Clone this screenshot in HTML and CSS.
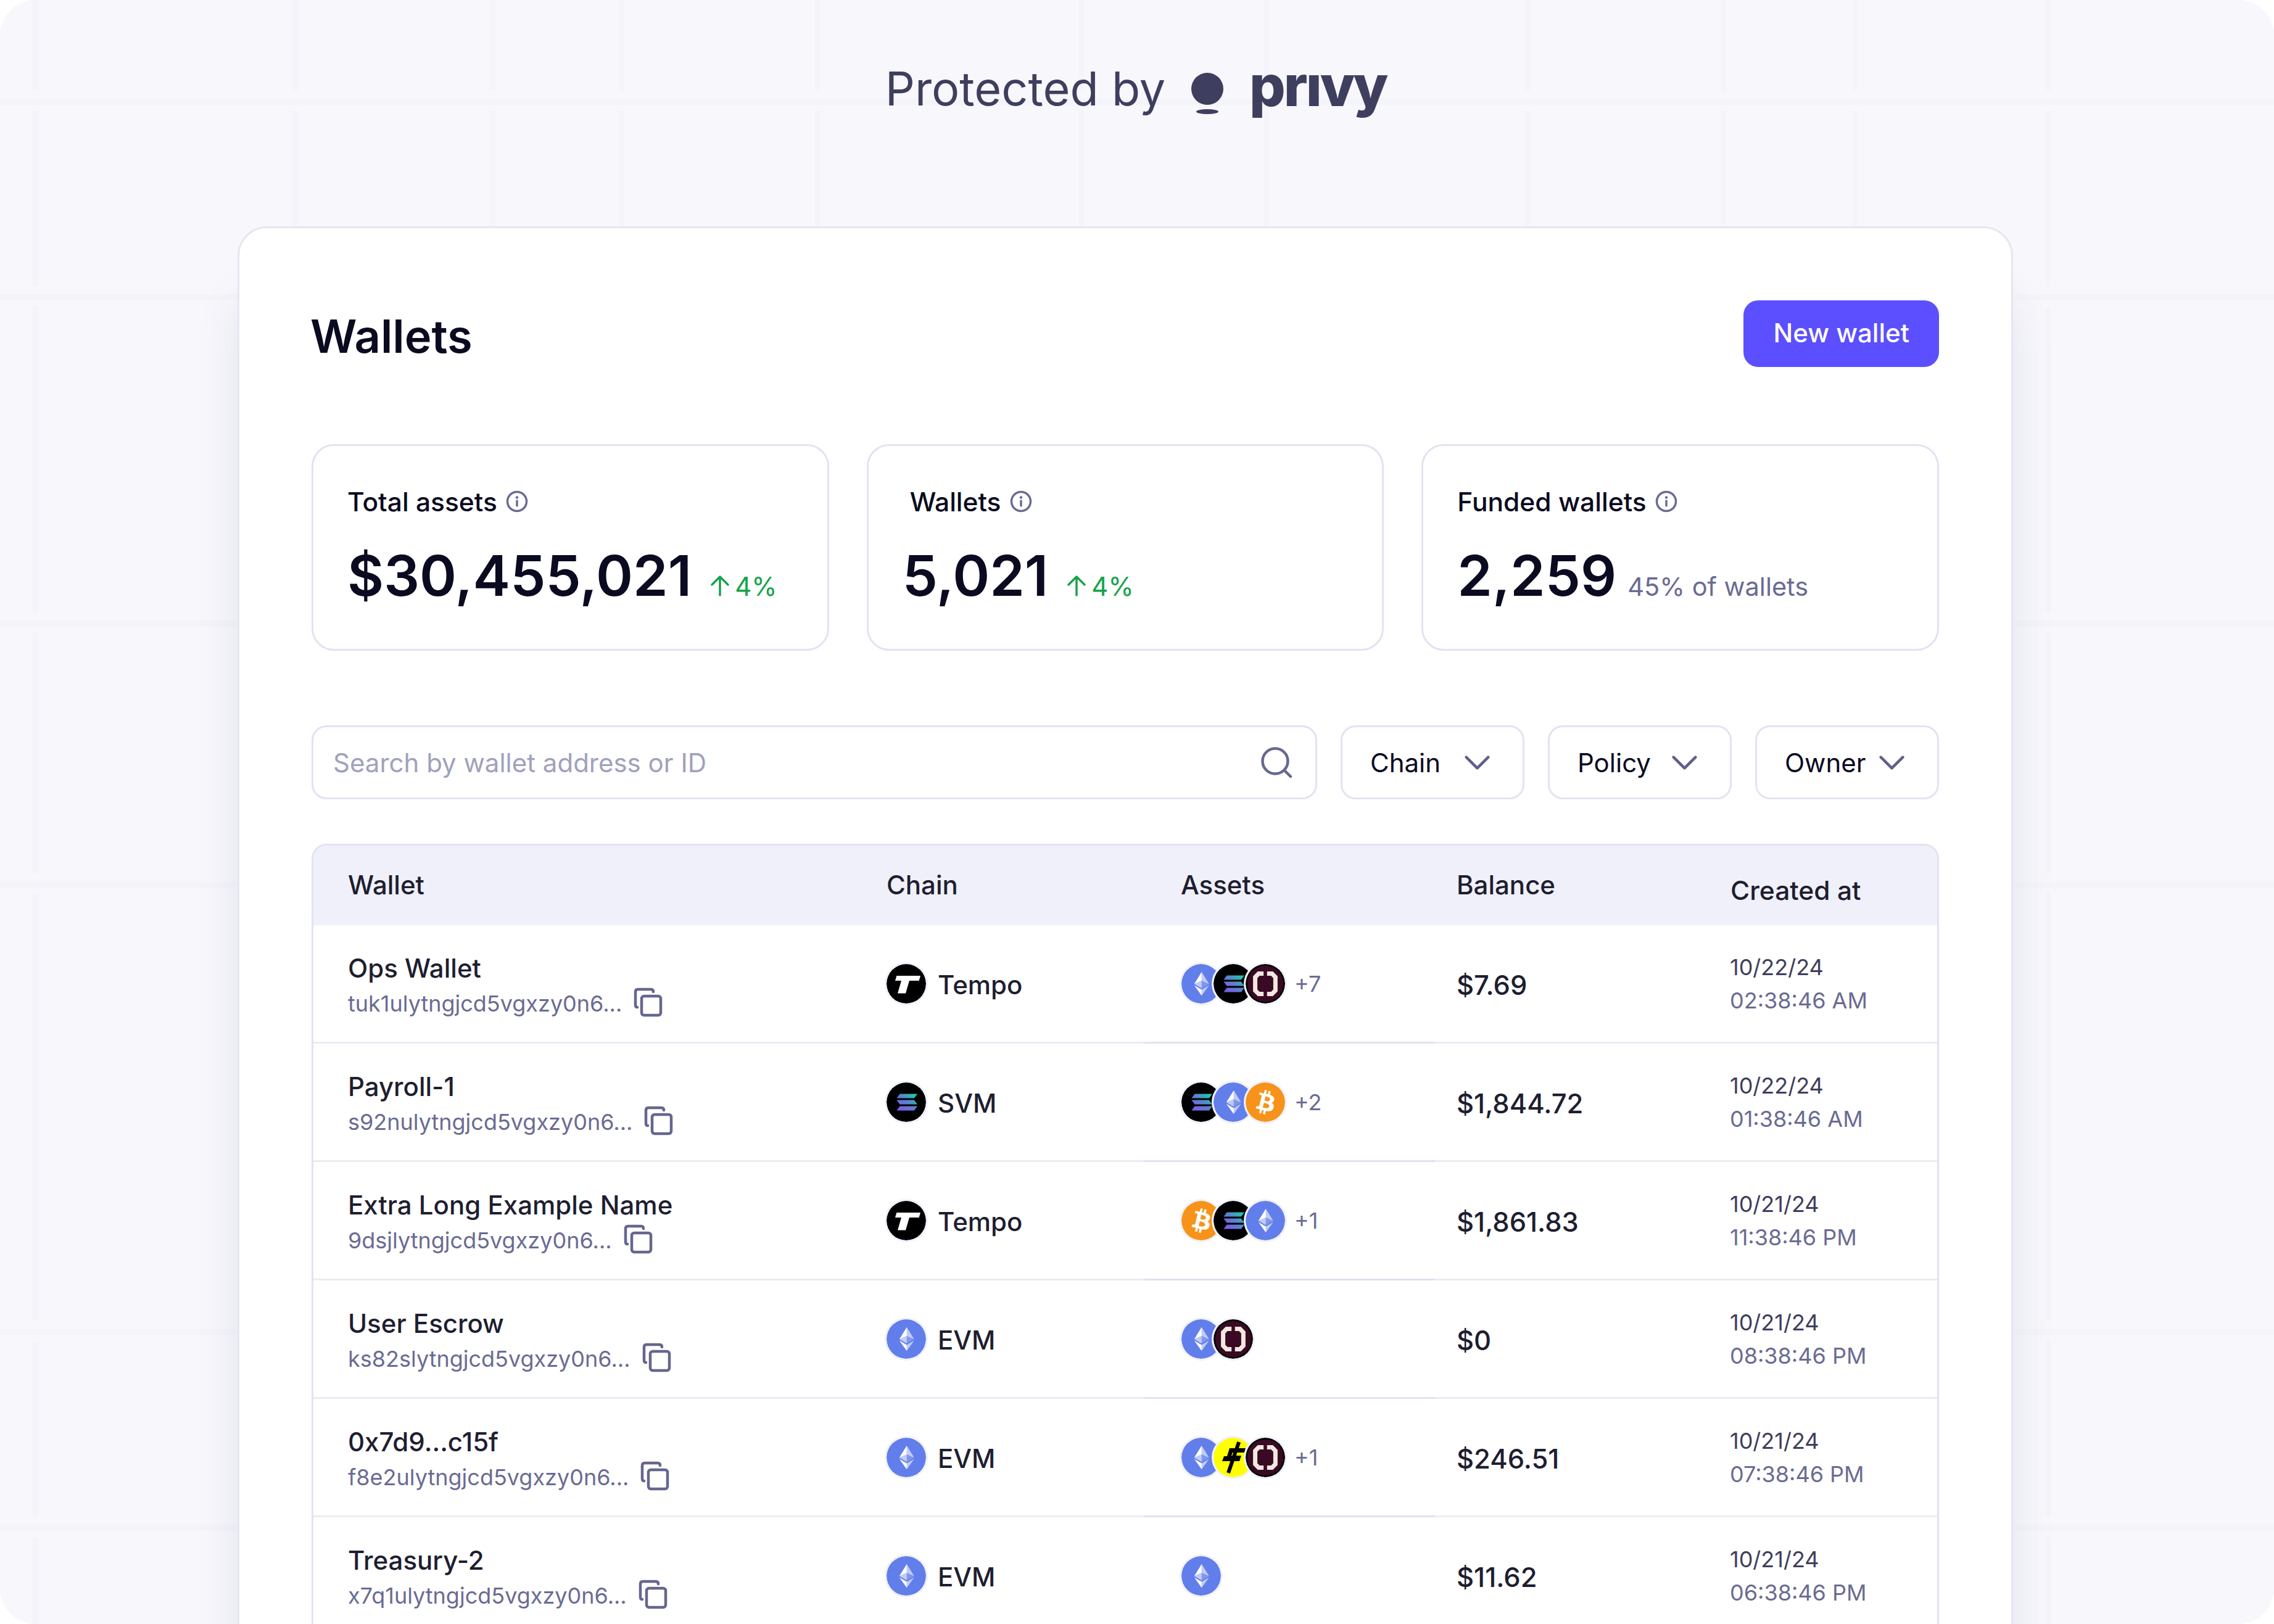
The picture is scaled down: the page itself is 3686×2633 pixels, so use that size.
FILE: index.html
```html
<!DOCTYPE html>
<html lang="en">
<head>
    <meta charset="UTF-8">
    <title>Wallets</title>
    <link rel="stylesheet" href="styles.css">
</head>
<body>
    <svg class="defs" aria-hidden="true">
        <defs>
            <linearGradient id="sol" gradientUnits="userSpaceOnUse" x1="24" y1="8" x2="9" y2="24">
                <stop offset="0" stop-color="#14d8a0"/>
                <stop offset="0.5" stop-color="#5a80d0"/>
                <stop offset="1" stop-color="#8a4ff0"/>
            </linearGradient>
        </defs>
        <symbol id="eth" viewBox="0 0 32 32">
            <circle cx="16" cy="16" r="16" fill="#627eea"/>
            <g transform="translate(3.2 3.2) scale(.8)" fill="#fff">
                <path fill-opacity=".6" d="M16.5 4v8.87l7.5 3.35z"/>
                <path d="M16.5 4L9 16.22l7.5-3.35z"/>
                <path fill-opacity=".6" d="M16.5 21.97V28L24 17.62z"/>
                <path d="M16.5 28v-6.03L9 17.62z"/>
                <path fill-opacity=".2" d="M16.5 20.57l7.5-4.35-7.5-3.35z"/>
                <path fill-opacity=".6" d="M9 16.22l7.5 4.35v-7.7z"/>
            </g>
        </symbol>
        <symbol id="sol-icon" viewBox="0 0 32 32">
            <circle cx="16" cy="16" r="16" fill="#000"/>
            <path fill="url(#sol)" d="M10.8 9.2H25l-2.600 3.600H8.200zM8.200 14.200h14.200l2.600 3.600H10.800zM10.800 19.200H25l-2.600 3.600H8.200z"/>
        </symbol>
        <symbol id="tempo" viewBox="0 0 32 32">
            <circle cx="16" cy="16" r="16" fill="#000"/>
            <path fill="#fff" d="M8.200 9.500h19.300l-1.200 4h-7.800l-3 10.300H9l3-10.300H7z"/>
        </symbol>
        <symbol id="btc" viewBox="0 0 32 32">
            <circle cx="16" cy="16" r="16" fill="#f7931a"/>
            <path fill="#fff" d="M23.189 14.02c.314-2.096-1.283-3.223-3.465-3.975l.708-2.84-1.728-.43-.69 2.765c-.454-.114-.92-.22-1.385-.326l.695-2.783L15.596 6l-.708 2.839c-.376-.086-.746-.17-1.104-.26l.002-.009-2.384-.595-.46 1.846s1.283.294 1.256.312c.7.175.826.638.805 1.006l-.806 3.235c.048.012.11.03.18.057l-.183-.045-1.13 4.532c-.086.212-.303.531-.793.41.018.025-1.256-.313-1.256-.313l-.858 1.978 2.25.561c.418.105.828.215 1.231.318l-.715 2.872 1.727.43.708-2.84c.472.127.93.245 1.378.357l-.706 2.828 1.728.43.715-2.866c2.948.558 5.164.333 6.097-2.333.752-2.146-.037-3.385-1.588-4.192 1.13-.26 1.98-1.003 2.207-2.538zm-3.95 5.538c-.533 2.147-4.148.986-5.32.695l.95-3.805c1.172.293 4.929.872 4.37 3.11zm.535-5.569c-.487 1.953-3.495.96-4.47.717l.86-3.45c.975.243 4.118.696 3.61 2.733z"/>
        </symbol>
        <symbol id="plum" viewBox="0 0 32 32">
            <circle cx="16" cy="16" r="16" fill="#000"/>
            <circle cx="16" cy="16" r="14.600" fill="#3a0a24"/>
            <path fill="none" stroke="#f3e8e0" stroke-width="3.500" d="M14.600 7.800h-4l-2.800 2.800v10.800l2.800 2.800h4M17.400 7.800h4l2.800 2.800v10.800l-2.800 2.800h-4"/>
        </symbol>
        <symbol id="usd" viewBox="0 0 32 32">
            <circle cx="16" cy="16" r="16" fill="#ff0"/>
            <path fill="#000" d="M13 8.500H26L25 12H15.500L14.500 14.500H22.500L21 19H7L8.500 15H11z"/>
            <path fill="none" stroke="#000" stroke-width="3" d="M20.600 3.500L12 28.500"/>
        </symbol>
        <symbol id="copy" viewBox="0 0 48 48">
            <rect x="13" y="14" width="31" height="31" rx="4" fill="none" stroke="#65668f" stroke-width="4.500"/>
            <path fill="none" stroke="#65668f" stroke-width="4.500" stroke-linecap="round" d="M6 32c-2 0-3-1.500-3-3.500V7c0-2.500 1.500-4 4-4h21c2.500 0 4 1.500 4 4"/>
        </symbol>
        <symbol id="info" viewBox="0 0 36 36">
            <circle cx="18" cy="18" r="15.500" fill="none" stroke="#6a6b93" stroke-width="3.500"/>
            <path fill="none" stroke="#6a6b93" stroke-width="3.500" stroke-linecap="round" d="M18 17v8"/>
            <circle cx="18" cy="11.500" r="2.200" fill="#6a6b93"/>
        </symbol>
        <symbol id="up" viewBox="0 0 32 36">
            <path fill="none" stroke="#16a34a" stroke-width="3.500" stroke-linecap="round" stroke-linejoin="round" d="M16 33V3M3 16L16 3l13 13"/>
        </symbol>
        <symbol id="chevron" viewBox="0 0 24 24">
            <path fill="none" stroke="#5f6089" stroke-width="1.900" stroke-linecap="round" stroke-linejoin="round" d="M19.500 8.250l-7.500 7.500-7.500-7.500"/>
        </symbol>
    </svg>

    <div class="page">
        <div class="brand">
            <span>Protected by</span>
            <span class="brand-mark">
                <svg width="52" height="72" viewBox="0 0 52 72"><circle cx="26" cy="26" r="26" fill="#3e3e5e"/><ellipse cx="26" cy="63" rx="18" ry="4" fill="#3e3e5e"/></svg>
                <span class="brand-name" aria-label="privy">prıvy</span>
            </span>
        </div>

        <div class="card">
            <div class="card-head">
                <h1>Wallets</h1>
                <button class="primary-btn">New wallet</button>
            </div>

            <div class="stats">
                <div class="stat">
                    <div class="stat-label">Total assets <svg class="info"><use href="#info"/></svg></div>
                    <div class="stat-line">
                        <span class="stat-value">$30,455,021</span>
                        <span class="stat-delta"><svg class="up"><use href="#up"/></svg>4%</span>
                    </div>
                </div>
                <div class="stat">
                    <div class="stat-label stat-label-nudge">Wallets <svg class="info"><use href="#info"/></svg></div>
                    <div class="stat-line">
                        <span class="stat-value">5,021</span>
                        <span class="stat-delta"><svg class="up"><use href="#up"/></svg>4%</span>
                    </div>
                </div>
                <div class="stat">
                    <div class="stat-label">Funded wallets <svg class="info"><use href="#info"/></svg></div>
                    <div class="stat-line">
                        <span class="stat-value">2,259</span>
                        <span class="stat-note">45% of wallets</span>
                    </div>
                </div>
            </div>

            <div class="filters">
                <div class="search">
                    <span>Search by wallet address or ID</span>
                    <svg width="52" height="52" viewBox="0 0 52 52"><circle cx="24" cy="24" r="20.500" fill="none" stroke="#676890" stroke-width="4.500"/><path d="M39 39l10 10" stroke="#676890" stroke-width="4.500" stroke-linecap="round"/></svg>
                </div>
                <div class="select">Chain <svg class="chev"><use href="#chevron"/></svg></div>
                <div class="select">Policy <svg class="chev"><use href="#chevron"/></svg></div>
                <div class="select">Owner <svg class="chev"><use href="#chevron"/></svg></div>
            </div>

            <div class="table">
                <div class="row row-head">
                    <div class="cell c-wallet">Wallet</div>
                    <div class="cell c-chain">Chain</div>
                    <div class="cell c-assets">Assets</div>
                    <div class="cell c-balance">Balance</div>
                    <div class="cell c-date head-low">Created at</div>
                </div>

                <div class="row">
                    <div class="cell c-wallet">
                        <div class="name">Ops Wallet</div>
                        <div class="addr">tuk1ulytngjcd5vgxzy0n6... <svg class="copy"><use href="#copy"/></svg></div>
                    </div>
                    <div class="cell c-chain"><svg class="coin"><use href="#tempo"/></svg>Tempo</div>
                    <div class="cell c-assets">
                        <svg class="coin"><use href="#eth"/></svg><svg class="coin"><use href="#sol-icon"/></svg><svg class="coin"><use href="#plum"/></svg><span class="more">+7</span>
                    </div>
                    <div class="cell c-balance">$7.69</div>
                    <div class="cell c-date"><div class="day">10/22/24</div><div class="time">02:38:46 AM</div></div>
                </div>

                <div class="row">
                    <div class="cell c-wallet">
                        <div class="name">Payroll-1</div>
                        <div class="addr">s92nulytngjcd5vgxzy0n6... <svg class="copy"><use href="#copy"/></svg></div>
                    </div>
                    <div class="cell c-chain"><svg class="coin"><use href="#sol-icon"/></svg>SVM</div>
                    <div class="cell c-assets">
                        <svg class="coin"><use href="#sol-icon"/></svg><svg class="coin"><use href="#eth"/></svg><svg class="coin"><use href="#btc"/></svg><span class="more">+2</span>
                    </div>
                    <div class="cell c-balance">$1,844.72</div>
                    <div class="cell c-date"><div class="day">10/22/24</div><div class="time">01:38:46 AM</div></div>
                </div>

                <div class="row">
                    <div class="cell c-wallet">
                        <div class="name">Extra Long Example Name</div>
                        <div class="addr">9dsjlytngjcd5vgxzy0n6... <svg class="copy"><use href="#copy"/></svg></div>
                    </div>
                    <div class="cell c-chain"><svg class="coin"><use href="#tempo"/></svg>Tempo</div>
                    <div class="cell c-assets">
                        <svg class="coin"><use href="#btc"/></svg><svg class="coin"><use href="#sol-icon"/></svg><svg class="coin"><use href="#eth"/></svg><span class="more">+1</span>
                    </div>
                    <div class="cell c-balance">$1,861.83</div>
                    <div class="cell c-date"><div class="day">10/21/24</div><div class="time">11:38:46 PM</div></div>
                </div>

                <div class="row">
                    <div class="cell c-wallet">
                        <div class="name">User Escrow</div>
                        <div class="addr">ks82slytngjcd5vgxzy0n6... <svg class="copy"><use href="#copy"/></svg></div>
                    </div>
                    <div class="cell c-chain"><svg class="coin"><use href="#eth"/></svg>EVM</div>
                    <div class="cell c-assets">
                        <svg class="coin"><use href="#eth"/></svg><svg class="coin"><use href="#plum"/></svg>
                    </div>
                    <div class="cell c-balance">$0</div>
                    <div class="cell c-date"><div class="day">10/21/24</div><div class="time">08:38:46 PM</div></div>
                </div>

                <div class="row">
                    <div class="cell c-wallet">
                        <div class="name">0x7d9...c15f</div>
                        <div class="addr">f8e2ulytngjcd5vgxzy0n6... <svg class="copy"><use href="#copy"/></svg></div>
                    </div>
                    <div class="cell c-chain"><svg class="coin"><use href="#eth"/></svg>EVM</div>
                    <div class="cell c-assets">
                        <svg class="coin"><use href="#eth"/></svg><svg class="coin"><use href="#usd"/></svg><svg class="coin"><use href="#plum"/></svg><span class="more">+1</span>
                    </div>
                    <div class="cell c-balance">$246.51</div>
                    <div class="cell c-date"><div class="day">10/21/24</div><div class="time">07:38:46 PM</div></div>
                </div>

                <div class="row">
                    <div class="cell c-wallet">
                        <div class="name">Treasury-2</div>
                        <div class="addr">x7q1ulytngjcd5vgxzy0n6... <svg class="copy"><use href="#copy"/></svg></div>
                    </div>
                    <div class="cell c-chain"><svg class="coin"><use href="#eth"/></svg>EVM</div>
                    <div class="cell c-assets">
                        <svg class="coin"><use href="#eth"/></svg>
                    </div>
                    <div class="cell c-balance">$11.62</div>
                    <div class="cell c-date"><div class="day">10/21/24</div><div class="time">06:38:46 PM</div></div>
                </div>
            </div>
        </div>
    </div>
</body>
</html>
```

FILE: styles.css
```css
:root {
    --ink: #0a0a20;
    --text: #1e1e30;
    --muted: #6a6b93;
    --line: #e2e3f2;
    --page: #f7f7fc;
    --grid: #f4f5fa;
}

* {
    box-sizing: border-box;
}

body {
    margin: 0;
    background: #fff;
    font-family: "Inter", "Liberation Sans", sans-serif;
    color: var(--text);
}

/* symbols only; display:none would drop the gradient */
.defs {
    position: absolute;
    width: 0;
    height: 0;
}

.page {
    width: 3686px;
    height: 2633px;
    overflow: hidden;
    border-radius: 58px;
    background-color: var(--page);
    /* faint grid behind the card: breaks in the uprights sit around each horizontal line */
    background-image:
        linear-gradient(to bottom,
            transparent 147px, var(--page) 147px, var(--page) 160px, var(--grid) 160px, var(--grid) 170px, var(--page) 170px, var(--page) 180px, transparent 180px,
            transparent 464px, var(--page) 464px, var(--page) 477px, var(--grid) 477px, var(--grid) 487px, var(--page) 487px, var(--page) 497px, transparent 497px,
            transparent 993px, var(--page) 993px, var(--page) 1006px, var(--grid) 1006px, var(--grid) 1016px, var(--page) 1016px, var(--page) 1026px, transparent 1026px,
            transparent 1416px, var(--page) 1416px, var(--page) 1429px, var(--grid) 1429px, var(--grid) 1439px, var(--page) 1439px, var(--page) 1449px, transparent 1449px,
            transparent 2141px, var(--page) 2141px, var(--page) 2154px, var(--grid) 2154px, var(--grid) 2164px, var(--page) 2164px, var(--page) 2174px, transparent 2174px,
            transparent 2459px, var(--page) 2459px, var(--page) 2472px, var(--grid) 2472px, var(--grid) 2482px, var(--page) 2482px, var(--page) 2492px, transparent 2492px),
        linear-gradient(to right,
            transparent 52px, var(--grid) 52px, var(--grid) 62px, transparent 62px,
            transparent 473px, var(--grid) 473px, var(--grid) 483px, transparent 483px,
            transparent 793px, var(--grid) 793px, var(--grid) 803px, transparent 803px,
            transparent 1004px, var(--grid) 1004px, var(--grid) 1012px, transparent 1012px,
            transparent 1321px, var(--grid) 1321px, var(--grid) 1329px, transparent 1329px,
            transparent 1749px, var(--grid) 1749px, var(--grid) 1757px, transparent 1757px,
            transparent 2049px, var(--grid) 2049px, var(--grid) 2057px, transparent 2057px,
            transparent 2472px, var(--grid) 2472px, var(--grid) 2480px, transparent 2480px,
            transparent 2789px, var(--grid) 2789px, var(--grid) 2797px, transparent 2797px,
            transparent 3003px, var(--grid) 3003px, var(--grid) 3011px, transparent 3011px,
            transparent 3316px, var(--grid) 3316px, var(--grid) 3324px, transparent 3324px);
}

.brand {
    height: 286px;
    margin-bottom: 81px;
    padding-right: 4px;
    display: flex;
    align-items: center;
    justify-content: center;
    gap: 42px;
    font-size: 75.5px;
    color: #3e3e5e;
}

.brand-mark {
    display: flex;
    align-items: center;
    gap: 42px;
}

.brand-mark svg {
    margin-top: 22px;
}

.brand-name {
    margin-bottom: 8px;
    font-size: 92px;
    font-weight: 800;
    letter-spacing: -3px;
    line-height: 1;
}

.card {
    width: 2878px;
    height: 2400px;
    margin-left: 385px;
    padding: 117px;
    background: #fff;
    border: 3px solid #e6e6f3;
    border-radius: 48px;
    box-shadow: 0 110px 70px rgba(60, 60, 110, 0.1);
}

.card-head {
    height: 108px;
    margin-bottom: 125px;
    display: flex;
    align-items: center;
    justify-content: space-between;
}

.card-head h1 {
    margin: 7px 0 0 -2px;
    font-size: 74px;
    font-weight: 600;
    color: var(--ink);
}

.primary-btn {
    height: 108px;
    padding: 0 48px 3px;
    border: none;
    border-radius: 24px;
    background: #5b4fff;
    color: #fff;
    font-family: inherit;
    font-size: 42px;
    font-weight: 500;
}

.stats {
    display: grid;
    grid-template-columns: repeat(3, 1fr);
    gap: 61px;
    margin-bottom: 121px;
}

.stat {
    height: 335px;
    padding: 60px 55px 0;
    border: 3px solid var(--line);
    border-radius: 36px;
}

.stat-label {
    display: flex;
    align-items: center;
    gap: 14px;
    height: 60px;
    font-size: 42.5px;
    font-weight: 500;
    color: var(--ink);
}

.stat-label-nudge {
    margin-left: 12px;
}

.info {
    width: 36px;
    height: 36px;
}

.stat-line {
    display: flex;
    align-items: baseline;
    gap: 30px;
    margin-top: 35px;
    white-space: nowrap;
}

.stat-value {
    font-size: 91px;
    font-weight: 600;
    color: var(--ink);
}

.stat-delta {
    font-size: 42px;
    color: #16a34a;
}

.stat-note {
    margin-left: -12px;
    font-size: 41.5px;
    color: var(--muted);
}

.up {
    width: 32px;
    height: 36px;
    margin-right: 8px;
    vertical-align: -2px;
}

.filters {
    display: flex;
    gap: 38px;
    height: 120px;
    margin-bottom: 72px;
}

.search {
    flex: 1;
    display: flex;
    align-items: center;
    justify-content: space-between;
    padding: 0 37px 0 32px;
    border: 3px solid var(--line);
    border-radius: 24px;
    font-size: 42px;
    color: #a0a1bd;
}

.select {
    width: 298px;
    display: flex;
    align-items: center;
    justify-content: space-between;
    padding: 0 45px;
    border: 3px solid var(--line);
    border-radius: 24px;
    font-size: 42px;
    color: var(--ink);
}

.chev {
    width: 57px;
    height: 57px;
    flex: none;
}

.table {
    border: 3px solid var(--line);
    border-bottom: none;
    border-radius: 24px 24px 0 0;
    overflow: hidden;
}

.row {
    display: grid;
    grid-template-columns: 870px 477px 471px 440px 1fr;
    height: 192px;
    font-size: 42px;
    font-weight: 500;
}

.cell {
    display: flex;
    align-items: center;
    border-bottom: 3px solid #e9edf3;
}

.c-wallet {
    flex-direction: column;
    align-items: flex-start;
    justify-content: center;
    padding: 4px 0 0 56px;
}

.c-chain {
    gap: 16px;
    padding: 4px 0 0 56px;
}

.c-chain .coin {
    margin-top: -4px;
}

.c-assets {
    padding-left: 57px;
    border-bottom-color: #e0e2f0;
}

.c-balance {
    padding: 4px 0 0 35px;
    font-size: 43.5px;
}

.c-date {
    flex-direction: column;
    align-items: flex-start;
    justify-content: center;
    padding-left: 38px;
}

.row-head {
    height: 129px;
    background: #f0f0fa;
}

.row-head .cell {
    flex-direction: row;
    align-items: center;
    justify-content: flex-start;
    border-bottom: none;
    padding-top: 0;
    padding-bottom: 3px;
    font-size: 42px;
}

.row-head .c-chain,
.row-head .c-assets {
    padding-left: 59px;
}

.row-head .head-low {
    padding-top: 15px;
    padding-bottom: 0;
    padding-left: 39px;
    font-size: 42.5px;
}

.name {
    line-height: 60px;
}

.addr {
    display: flex;
    align-items: center;
    gap: 19px;
    height: 54px;
    font-size: 36px;
    font-weight: 400;
    color: var(--muted);
}

.copy {
    width: 48px;
    height: 48px;
    margin-top: -4px;
}

.coin {
    width: 70px;
    height: 70px;
    flex: none;
    padding: 3px;
    border-radius: 50%;
    background: #f0f1fa;
}

.c-assets .coin + .coin {
    margin-left: -18px;
}

.more {
    margin-left: 12px;
    font-size: 36px;
    font-weight: 400;
    color: var(--muted);
}

.day {
    line-height: 54px;
    font-size: 36px;
    font-weight: 400;
    color: #3e3e5c;
}

.time {
    line-height: 54px;
    font-size: 36px;
    font-weight: 400;
    color: var(--muted);
}
```
